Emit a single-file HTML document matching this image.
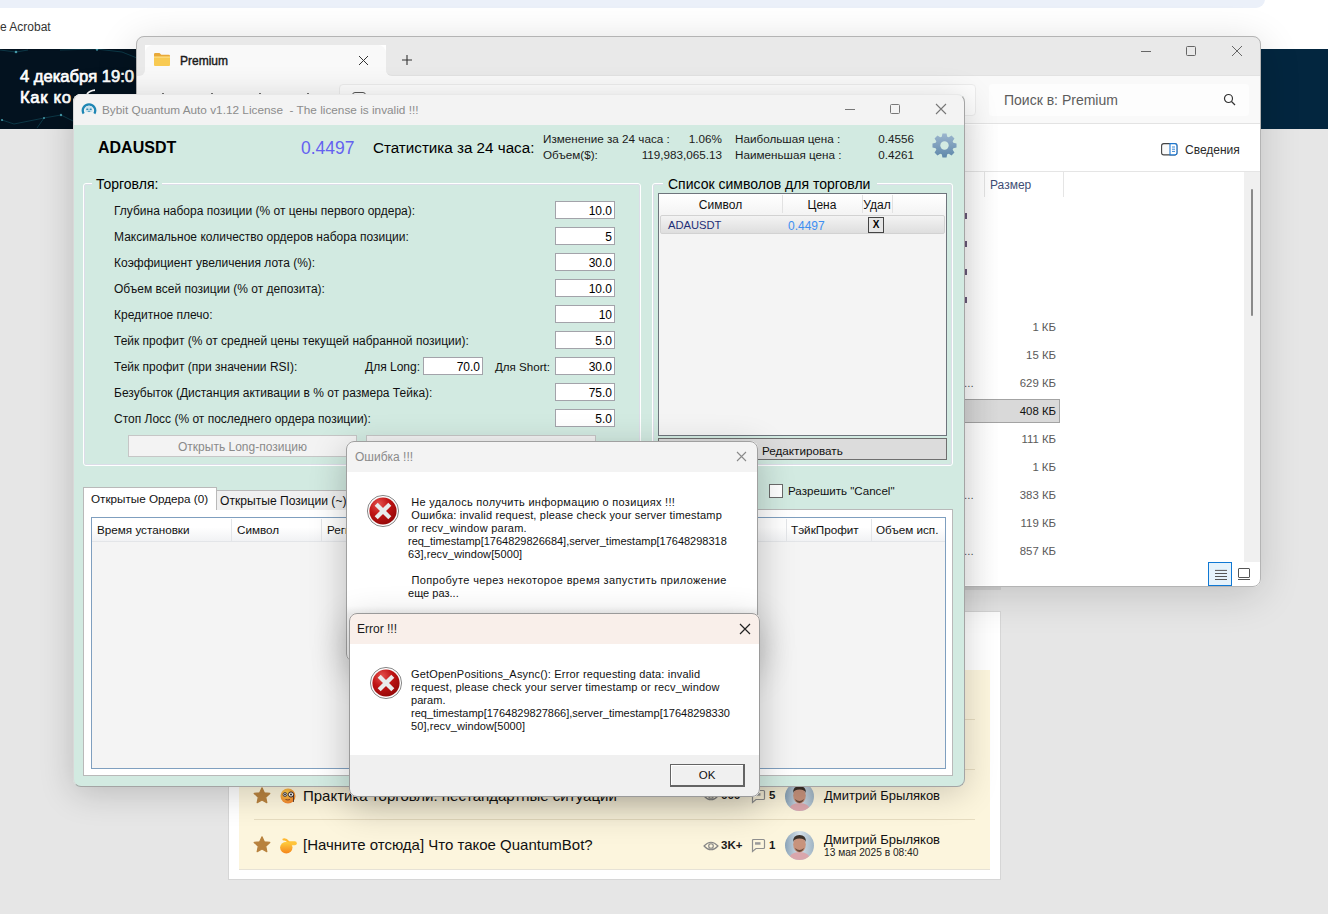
<!DOCTYPE html>
<html><head><meta charset="utf-8">
<style>
*{box-sizing:border-box;margin:0;padding:0}
html,body{width:1328px;height:914px;overflow:hidden}
body{position:relative;background:#e6e6e6;font-family:"Liberation Sans",sans-serif;color:#000}
.a{position:absolute}
.t{position:absolute;white-space:nowrap;line-height:1}
.win{position:absolute;left:0;top:0;width:1328px;height:914px}
.c{text-align:center}
.r{text-align:right}
</style></head><body>

<div class="a" style="left:0px;top:0px;width:1328px;height:49px;background:#fff"></div>
<div class="a" style="left:-10px;top:-10px;width:1275px;height:18px;background:#ebf0f9;border-radius:0 0 9px 0"></div>
<div class="t" style="left:0px;top:21px;font-size:12px;color:#333;">e Acrobat</div>
<div class="a" style="left:0px;top:49px;width:1328px;height:80px;background:#03121f"></div>
<div class="a" style="left:1260px;top:49px;width:68px;height:80px;background:#03263f"></div>
<svg class="a" style="left:0;top:49px" width="137" height="80" viewBox="0 0 137 80"><g stroke="#1d7a8c" stroke-width="0.8" fill="none" opacity="0.45"><path d="M0 1 L16 3 L28 1"/><path d="M60 1 L96 0 L122 3 L137 9"/><path d="M2 71 L14 75 L44 69 L61 66 L73 72"/><path d="M37 79 L44 69"/></g><g fill="#5fc8d8" opacity="0.7"><circle cx="16" cy="3" r="1.3"/><circle cx="97" cy="0.5" r="1.2"/><circle cx="2" cy="71" r="1.1"/><circle cx="44" cy="69" r="1"/><circle cx="61" cy="66" r="1.2"/></g></svg>
<div class="t" style="left:20px;top:69px;font-size:16.6px;color:#fff;-webkit-text-stroke:0.7px #fff;">4 декабря 19:0</div>
<div class="t" style="left:20px;top:90px;font-size:16.6px;color:#fff;-webkit-text-stroke:0.7px #fff;letter-spacing:0.7px;">Как ко</div>
<svg class="a" style="left:86px;top:89px" width="10" height="6" viewBox="0 0 10 6"><path d="M1 5 Q4 1.5 9 1.2" stroke="#fff" stroke-width="1.8" fill="none"/></svg>
<div class="a" style="left:228px;top:611px;width:773px;height:269px;background:#fff;border:1px solid #d6d6d6"></div>
<div class="a" style="left:239px;top:670px;width:751px;height:200px;background:#fcf5dd;border-bottom:1px solid #e6e2d6"></div>
<div class="a" style="left:254px;top:719px;width:721px;height:1px;background:#e6dcc0"></div>
<div class="a" style="left:254px;top:769px;width:721px;height:1px;background:#e6dcc0"></div>
<div class="a" style="left:254px;top:819px;width:721px;height:1px;background:#e6dcc0"></div>
<svg class="a" style="left:253px;top:786.5px" width="18" height="18" viewBox="0 0 18 18"><polygon points="9.00,0.80 11.29,5.84 16.80,6.47 12.71,10.21 13.82,15.63 9.00,12.90 4.18,15.63 5.29,10.21 1.20,6.47 6.71,5.84" fill="#b8823e" stroke="#b8823e" stroke-width="1.2" stroke-linejoin="round"/></svg>
<svg class="a" style="left:280px;top:788px" width="16" height="16" viewBox="0 0 16 16"><defs><radialGradient id="ef1" cx="0.4" cy="0.3" r="0.8"><stop offset="0" stop-color="#ffd04a"/><stop offset="1" stop-color="#f07a2a"/></radialGradient></defs><circle cx="8" cy="8" r="7.5" fill="url(#ef1)"/><circle cx="5" cy="6.5" r="2" fill="#fff" stroke="#3a2a2a" stroke-width="0.8"/><circle cx="11" cy="6.5" r="2.6" fill="#fff" stroke="#3a2a2a" stroke-width="1"/><circle cx="5" cy="6.5" r="0.9" fill="#222"/><circle cx="11" cy="6.5" r="1" fill="#222"/><path d="M13.5 7 V14" stroke="#3a2a2a" stroke-width="0.8"/><path d="M5.5 11.5 Q8 12.5 10 11.5" stroke="#7a3a1a" stroke-width="0.9" fill="none"/></svg>
<div class="t" style="left:303px;top:787.5px;font-size:15px;color:#111;">Практика торговли: нестандартные ситуации</div>
<svg class="a" style="left:703px;top:790px" width="16" height="12" viewBox="0 0 16 12"><path d="M1 6 Q8 -1.5 15 6 Q8 13.5 1 6 Z" stroke="#858585" stroke-width="1.1" fill="none"/><circle cx="8" cy="6" r="2.3" stroke="#858585" stroke-width="1.1" fill="none"/></svg>
<div class="t" style="left:721px;top:790px;font-size:11.5px;color:#1a1a1a;font-weight:bold;">666</div>
<svg class="a" style="left:751px;top:788.5px" width="15" height="15" viewBox="0 0 15 15"><path d="M2.5 1.5 H12.5 Q13.5 1.5 13.5 2.5 V9.5 Q13.5 10.5 12.5 10.5 H5 L1.5 13.5 V2.5 Q1.5 1.5 2.5 1.5 Z" stroke="#8f8f8f" stroke-width="1.2" fill="none"/><rect x="4" y="4.2" width="5.5" height="2.5" fill="#9a9a9a"/></svg>
<div class="t" style="left:769px;top:790px;font-size:11.5px;color:#1a1a1a;font-weight:bold;">5</div>
<svg class="a" style="left:785px;top:781.5px" width="29" height="29" viewBox="0 0 29 29"><defs><clipPath id="avc0"><circle cx="14.5" cy="14.5" r="14.5"/></clipPath><linearGradient id="avb0" x1="0" y1="0" x2="1" y2="0"><stop offset="0" stop-color="#8aa3b8"/><stop offset="0.5" stop-color="#d5e0e8"/><stop offset="1" stop-color="#9fb4c4"/></linearGradient></defs><g clip-path="url(#avc0)"><rect width="29" height="29" fill="url(#avb0)"/><path d="M3 29 Q5 21 14.5 21 Q24 21 26 29 Z" fill="#d9a6ac"/><ellipse cx="14.5" cy="13.5" rx="6.3" ry="8" fill="#c8937c"/><path d="M8 11 Q8 4 14.5 4 Q21 4 21 11 Q20 7.5 14.5 7.5 Q9 7.5 8 11 Z" fill="#3b3028"/><path d="M10 17 Q14.5 21 19 17 Q18 20.5 14.5 21 Q11 20.5 10 17 Z" fill="#6a4a3a"/></g></svg>
<div class="t" style="left:824px;top:788.5px;font-size:13px;color:#111;">Дмитрий Брыляков</div>
<svg class="a" style="left:253px;top:836.0px" width="18" height="18" viewBox="0 0 18 18"><polygon points="9.00,0.80 11.29,5.84 16.80,6.47 12.71,10.21 13.82,15.63 9.00,12.90 4.18,15.63 5.29,10.21 1.20,6.47 6.71,5.84" fill="#b8823e" stroke="#b8823e" stroke-width="1.2" stroke-linejoin="round"/></svg>
<svg class="a" style="left:280px;top:837.5px" width="17" height="16" viewBox="0 0 17 16"><defs><linearGradient id="ef2" x1="0" y1="0" x2="0" y2="1"><stop offset="0" stop-color="#ffcf3e"/><stop offset="1" stop-color="#f5861c"/></linearGradient></defs><rect x="6" y="3.2" width="10.8" height="4" rx="2" fill="#ffc43a"/><path d="M3.5 1.5 Q6.5 1.2 8 3.5 L8.5 5" stroke="#ffb830" stroke-width="2.2" fill="none" stroke-linecap="round"/><ellipse cx="6.3" cy="9.6" rx="6.2" ry="5.8" fill="url(#ef2)"/></svg>
<div class="t" style="left:303px;top:837.0px;font-size:15px;color:#111;">[Начните отсюда] Что такое QuantumBot?</div>
<svg class="a" style="left:703px;top:839.5px" width="16" height="12" viewBox="0 0 16 12"><path d="M1 6 Q8 -1.5 15 6 Q8 13.5 1 6 Z" stroke="#858585" stroke-width="1.1" fill="none"/><circle cx="8" cy="6" r="2.3" stroke="#858585" stroke-width="1.1" fill="none"/></svg>
<div class="t" style="left:721px;top:839.5px;font-size:11.5px;color:#1a1a1a;font-weight:bold;">3K+</div>
<svg class="a" style="left:751px;top:838.0px" width="15" height="15" viewBox="0 0 15 15"><path d="M2.5 1.5 H12.5 Q13.5 1.5 13.5 2.5 V9.5 Q13.5 10.5 12.5 10.5 H5 L1.5 13.5 V2.5 Q1.5 1.5 2.5 1.5 Z" stroke="#8f8f8f" stroke-width="1.2" fill="none"/><rect x="4" y="4.2" width="5.5" height="2.5" fill="#9a9a9a"/></svg>
<div class="t" style="left:769px;top:839.5px;font-size:11.5px;color:#1a1a1a;font-weight:bold;">1</div>
<svg class="a" style="left:785px;top:831.0px" width="29" height="29" viewBox="0 0 29 29"><defs><clipPath id="avc1"><circle cx="14.5" cy="14.5" r="14.5"/></clipPath><linearGradient id="avb1" x1="0" y1="0" x2="1" y2="0"><stop offset="0" stop-color="#8aa3b8"/><stop offset="0.5" stop-color="#d5e0e8"/><stop offset="1" stop-color="#9fb4c4"/></linearGradient></defs><g clip-path="url(#avc1)"><rect width="29" height="29" fill="url(#avb1)"/><path d="M3 29 Q5 21 14.5 21 Q24 21 26 29 Z" fill="#d9a6ac"/><ellipse cx="14.5" cy="13.5" rx="6.3" ry="8" fill="#c8937c"/><path d="M8 11 Q8 4 14.5 4 Q21 4 21 11 Q20 7.5 14.5 7.5 Q9 7.5 8 11 Z" fill="#3b3028"/><path d="M10 17 Q14.5 21 19 17 Q18 20.5 14.5 21 Q11 20.5 10 17 Z" fill="#6a4a3a"/></g></svg>
<div class="t" style="left:824px;top:833.0px;font-size:13px;color:#111;">Дмитрий Брыляков</div>
<div class="t" style="left:824px;top:848.0px;font-size:10.2px;color:#222;">13 мая 2025 в 08:40</div>
<div class="a" style="left:965px;top:587px;width:36px;height:3px;background:#d4d4d4"></div>
<div class="a" style="left:136px;top:36px;width:1125px;height:551px;border-radius:8px;box-shadow:0 8px 40px rgba(0,0,0,.16)"></div>
<div class="win" style="clip-path:inset(36px 67px 327px 136px round 8px)">
<div class="a" style="left:136px;top:36px;width:1125px;height:551px;background:#fff"></div>
<div class="a" style="left:136px;top:60px;width:1125px;height:64px;background:#f9f9f9;border-bottom:1px solid #e3e3e3"></div>
<div class="a" style="left:136px;top:36px;width:1125px;height:9px;background:#e9e9e9"></div>
<div class="a" style="left:136px;top:36px;width:9px;height:40px;background:#e9e9e9;border-bottom-right-radius:6px"></div>
<div class="a" style="left:145px;top:45px;width:241px;height:35px;background:#f9f9f9;border-radius:8px 8px 0 0"></div>
<div class="a" style="left:386px;top:36px;width:875px;height:40px;background:#e9e9e9;border-bottom-left-radius:6px;border-bottom:1px solid #e2e2e2"></div>
<div class="a" style="left:339px;top:84px;width:637px;height:32px;background:#fdfdfd;border-radius:4px;border:1px solid #ececec"></div>
<div class="a" style="left:162px;top:93px;width:2px;height:2px;background:#444;border-radius:1px"></div>
<div class="a" style="left:211px;top:93px;width:2px;height:2px;background:#444;border-radius:1px"></div>
<div class="a" style="left:259px;top:93px;width:2px;height:2px;background:#444;border-radius:1px"></div>
<div class="a" style="left:307px;top:93px;width:2px;height:2px;background:#444;border-radius:1px"></div>
<div class="a" style="left:352px;top:92px;width:14px;height:8px;border:1.3px solid #555;border-radius:3px"></div>
<svg class="a" style="left:153px;top:52px" width="18" height="15" viewBox="0 0 18 15"><path d="M1 2.2 Q1 1 2.2 1 H6.5 L8.3 2.8 H15.8 Q17 2.8 17 4 V5 H1 Z" fill="#e8a93a"/><path d="M1 4.6 H17 V13 Q17 14 16 14 H2 Q1 14 1 13 Z" fill="#f8ca52"/><path d="M1 4.6 H17 V6 H1Z" fill="#fbd878"/></svg>
<div class="t" style="left:180px;top:54.5px;font-size:12px;color:#1a1a1a;-webkit-text-stroke:0.4px #1a1a1a;">Premium</div>
<svg class="a" style="left:358px;top:55px" width="11" height="11" viewBox="0 0 11 11"><path d="M1 1 L10 10 M10 1 L1 10" stroke="#333" stroke-width="1"/></svg>
<svg class="a" style="left:401px;top:54px" width="12" height="12" viewBox="0 0 12 12"><path d="M6 1 V11 M1 6 H11" stroke="#333" stroke-width="1.1"/></svg>
<div class="a" style="left:1141px;top:51px;width:10px;height:1px;background:#666"></div>
<div class="a" style="left:1186px;top:46px;width:10px;height:10px;border:1px solid #666;border-radius:1.5px"></div>
<svg class="a" style="left:1231px;top:45px" width="12" height="12" viewBox="0 0 12 12"><path d="M1 1 L11 11 M11 1 L1 11" stroke="#666" stroke-width="1"/></svg>
<div class="a" style="left:989px;top:84px;width:260px;height:32px;background:#fdfdfd;border-radius:4px"></div>
<div class="t" style="left:1004px;top:93px;font-size:14px;color:#5c5c5c;">Поиск в: Premium</div>
<svg class="a" style="left:1223px;top:93px" width="14" height="14" viewBox="0 0 14 14"><circle cx="5.5" cy="5.5" r="4" stroke="#333" stroke-width="1.2" fill="none"/><path d="M8.5 8.5 L12 12" stroke="#333" stroke-width="1.3"/></svg>
<div class="a" style="left:136px;top:171px;width:1125px;height:1px;background:#e5e5e5"></div>
<svg class="a" style="left:1161px;top:143px" width="17" height="13" viewBox="0 0 17 13"><rect x="0.6" y="0.6" width="15.3" height="11.3" rx="2.2" stroke="#444" stroke-width="1.1" fill="#fafafa"/><path d="M9 0.6 H13.7 Q15.9 0.6 15.9 2.8 V9.7 Q15.9 11.9 13.7 11.9 H9 Z" stroke="#1f78d0" stroke-width="1.1" fill="#fff"/><path d="M11 4 H14 M11 6.2 H14 M11 8.4 H14" stroke="#1f78d0" stroke-width="0.9"/></svg>
<div class="t" style="left:1185px;top:144px;font-size:12px;color:#2a2a2a;">Сведения</div>
<div class="a" style="left:984px;top:172px;width:1px;height:25px;background:#e5e5e5"></div>
<div class="a" style="left:1063px;top:172px;width:1px;height:25px;background:#e5e5e5"></div>
<div class="t" style="left:990px;top:179px;font-size:12px;color:#3e4d74;">Размер</div>
<div class="t r" style="left:980px;top:322px;width:76px;font-size:11.4px;color:#5a5a5a">1 КБ</div>
<div class="t r" style="left:980px;top:350px;width:76px;font-size:11.4px;color:#5a5a5a">15 КБ</div>
<div class="t r" style="left:980px;top:378px;width:76px;font-size:11.4px;color:#5a5a5a">629 КБ</div>
<div class="a" style="left:960px;top:399px;width:100px;height:24px;background:#d9d9d9;border:1px solid #a3a3a3"></div>
<div class="t r" style="left:980px;top:406px;width:76px;font-size:11.4px;color:#111">408 КБ</div>
<div class="t r" style="left:980px;top:434px;width:76px;font-size:11.4px;color:#5a5a5a">111 КБ</div>
<div class="t r" style="left:980px;top:462px;width:76px;font-size:11.4px;color:#5a5a5a">1 КБ</div>
<div class="t r" style="left:980px;top:490px;width:76px;font-size:11.4px;color:#5a5a5a">383 КБ</div>
<div class="t r" style="left:980px;top:518px;width:76px;font-size:11.4px;color:#5a5a5a">119 КБ</div>
<div class="t r" style="left:980px;top:546px;width:76px;font-size:11.4px;color:#5a5a5a">857 КБ</div>
<div class="t" style="left:964px;top:378px;font-size:11.5px;color:#555;">...</div>
<div class="t" style="left:964px;top:490px;font-size:11.5px;color:#555;">...</div>
<div class="t" style="left:964px;top:546px;font-size:11.5px;color:#555;">...</div>
<div class="a" style="left:965px;top:213px;width:1.5px;height:6px;background:#6a5a7a"></div>
<div class="a" style="left:965px;top:241px;width:1.5px;height:6px;background:#6a5a7a"></div>
<div class="a" style="left:965px;top:269px;width:1.5px;height:6px;background:#6a5a7a"></div>
<div class="a" style="left:965px;top:297px;width:1.5px;height:6px;background:#6a5a7a"></div>
<div class="a" style="left:1244px;top:172px;width:16px;height:390px;background:#f0f0f0"></div>
<div class="a" style="left:1251px;top:189px;width:2px;height:127px;background:#8a8a8a;border-radius:1px"></div>
<div class="a" style="left:1208px;top:562px;width:24px;height:24px;background:#e5f2fb;border:1.5px solid #0f78d4"></div>
<svg class="a" style="left:1213px;top:567px" width="16" height="14" viewBox="0 0 16 14"><path d="M2 3.4 H14 M2 6.5 H14 M2 9.5 H14 M2 12.5 H14" stroke="#555" stroke-width="1"/></svg>
<div class="a" style="left:1238px;top:568px;width:12px;height:10px;border:1px solid #555;border-radius:1px"></div>
<div class="a" style="left:1238px;top:579px;width:12px;height:1px;background:#555"></div>
<div class="a" style="left:965px;top:125px;width:35px;height:460px;background:linear-gradient(90deg,rgba(0,0,0,.03),rgba(0,0,0,0))"></div>
</div>
<div class="a" style="left:136px;top:36px;width:1125px;height:551px;border:1px solid #b4b4b4;border-radius:8px"></div>
<div class="a" style="left:73px;top:94px;width:892px;height:693px;border-radius:8px;box-shadow:0 6px 34px rgba(0,0,0,.19)"></div>
<div class="win" style="clip-path:inset(94px 363px 127px 73px round 8px)">
<div class="a" style="left:73px;top:94px;width:892px;height:693px;background:#d2eae1"></div>
<div class="a" style="left:73px;top:94px;width:892px;height:31px;background:#f3f3f3"></div>
<svg class="a" style="left:81px;top:100px" width="16" height="16" viewBox="0 0 16 16"><path d="M2.6 13.6 A6.2 6.2 0 1 1 13.4 13.6" stroke="#1e86b4" stroke-width="2.3" fill="none"/><path d="M4.8 6.8 Q8 5 11.2 6.8 L11.6 11.5 Q8 13 4.4 11.5 Z" fill="#c6e0ec"/><ellipse cx="6.3" cy="9.3" rx="1.2" ry="0.8" fill="#2a86b0"/><ellipse cx="9.7" cy="9.3" rx="1.2" ry="0.8" fill="#2a86b0"/><rect x="6.8" y="10.8" width="2.4" height="1.2" fill="#5aa4c8"/></svg>
<div class="t" style="left:102px;top:105px;font-size:11.8px;color:#8c8c8c;">Bybit Quantum Auto v1.12 License&nbsp; - The license is invalid !!!</div>
<div class="a" style="left:845px;top:109px;width:10px;height:1px;background:#777"></div>
<div class="a" style="left:890px;top:104px;width:10px;height:10px;border:1px solid #777;border-radius:1.5px"></div>
<svg class="a" style="left:935px;top:103px" width="12" height="12" viewBox="0 0 12 12"><path d="M1 1 L11 11 M11 1 L1 11" stroke="#777" stroke-width="1.1"/></svg>
<div class="t" style="left:98px;top:140px;font-size:16px;color:#000;font-weight:bold;">ADAUSDT</div>
<div class="t" style="left:301px;top:140px;font-size:17.5px;color:#6461f0;">0.4497</div>
<div class="t" style="left:373px;top:140px;font-size:15.2px;color:#000;">Статистика за 24 часа:</div>
<div class="t" style="left:543px;top:133px;font-size:11.7px;color:#1a1a1a;">Изменение за 24 часа :</div>
<div class="t" style="left:543px;top:149px;font-size:11.7px;color:#1a1a1a;">Объем($):</div>
<div class="t r" style="left:600px;top:133px;width:122px;font-size:11.7px;color:#1a1a1a">1.06%</div>
<div class="t r" style="left:600px;top:149px;width:122px;font-size:11.7px;color:#1a1a1a">119,983,065.13</div>
<div class="t" style="left:735px;top:133px;font-size:11.7px;color:#1a1a1a;">Наибольшая цена :</div>
<div class="t" style="left:735px;top:149px;font-size:11.7px;color:#1a1a1a;">Наименьшая цена :</div>
<div class="t r" style="left:850px;top:133px;width:64px;font-size:11.7px;color:#1a1a1a">0.4556</div>
<div class="t r" style="left:850px;top:149px;width:64px;font-size:11.7px;color:#1a1a1a">0.4261</div>
<svg class="a" style="left:932px;top:133px" width="25" height="25" viewBox="0 0 25 25"><defs><linearGradient id="gg" x1="0" y1="0" x2="0" y2="1"><stop offset="0" stop-color="#9cb6ce"/><stop offset="1" stop-color="#5f88aa"/></linearGradient></defs><polygon points="24.52,10.44 24.52,14.56 21.29,15.22 20.64,16.79 22.46,19.54 19.54,22.46 16.79,20.64 15.22,21.29 14.56,24.52 10.44,24.52 9.78,21.29 8.21,20.64 5.46,22.46 2.54,19.54 4.36,16.79 3.71,15.22 0.48,14.56 0.48,10.44 3.71,9.78 4.36,8.21 2.54,5.46 5.46,2.54 8.21,4.36 9.78,3.71 10.44,0.48 14.56,0.48 15.22,3.71 16.79,4.36 19.54,2.54 22.46,5.46 20.64,8.21 21.29,9.78" fill="url(#gg)"/><circle cx="12.5" cy="12.5" r="4.2" fill="#d3ebe2"/></svg>
<div class="a" style="left:83px;top:183px;width:558px;height:283px;border:1px solid #fff;border-radius:3px"></div>
<div class="a" style="left:84px;top:184px;width:556px;height:281px;border:1px solid #dcdde8;border-radius:3px"></div>
<div class="a" style="left:92px;top:175px;width:70px;height:17px;background:#d2eae1"></div>
<div class="t" style="left:96px;top:177px;font-size:14px;color:#000;">Торговля:</div>
<div class="t" style="left:114px;top:205px;font-size:12px;color:#111;">Глубина набора позиции (% от цены первого ордера):</div>
<div class="t r" style="left:555px;top:201px;width:60px;height:18px;background:#fff;border:1px solid #a3a3aa;font-size:12px;padding:3px 2px 0 0;color:#000">10.0</div>
<div class="t" style="left:114px;top:231px;font-size:12px;color:#111;">Максимальное количество ордеров набора позиции:</div>
<div class="t r" style="left:555px;top:227px;width:60px;height:18px;background:#fff;border:1px solid #a3a3aa;font-size:12px;padding:3px 2px 0 0;color:#000">5</div>
<div class="t" style="left:114px;top:257px;font-size:12px;color:#111;">Коэффициент увеличения лота (%):</div>
<div class="t r" style="left:555px;top:253px;width:60px;height:18px;background:#fff;border:1px solid #a3a3aa;font-size:12px;padding:3px 2px 0 0;color:#000">30.0</div>
<div class="t" style="left:114px;top:283px;font-size:12px;color:#111;">Объем всей позиции (% от депозита):</div>
<div class="t r" style="left:555px;top:279px;width:60px;height:18px;background:#fff;border:1px solid #a3a3aa;font-size:12px;padding:3px 2px 0 0;color:#000">10.0</div>
<div class="t" style="left:114px;top:309px;font-size:12px;color:#111;">Кредитное плечо:</div>
<div class="t r" style="left:555px;top:305px;width:60px;height:18px;background:#fff;border:1px solid #a3a3aa;font-size:12px;padding:3px 2px 0 0;color:#000">10</div>
<div class="t" style="left:114px;top:335px;font-size:12px;color:#111;">Тейк профит (% от средней цены текущей набранной позиции):</div>
<div class="t r" style="left:555px;top:331px;width:60px;height:18px;background:#fff;border:1px solid #a3a3aa;font-size:12px;padding:3px 2px 0 0;color:#000">5.0</div>
<div class="t" style="left:114px;top:361px;font-size:12px;color:#111;">Тейк профит (при значении RSI):</div>
<div class="t r" style="left:555px;top:357px;width:60px;height:18px;background:#fff;border:1px solid #a3a3aa;font-size:12px;padding:3px 2px 0 0;color:#000">30.0</div>
<div class="t" style="left:114px;top:387px;font-size:12px;color:#111;">Безубыток (Дистанция активации в % от размера Тейка):</div>
<div class="t r" style="left:555px;top:383px;width:60px;height:18px;background:#fff;border:1px solid #a3a3aa;font-size:12px;padding:3px 2px 0 0;color:#000">75.0</div>
<div class="t" style="left:114px;top:413px;font-size:12px;color:#111;">Стоп Лосс (% от последнего ордера позиции):</div>
<div class="t r" style="left:555px;top:409px;width:60px;height:18px;background:#fff;border:1px solid #a3a3aa;font-size:12px;padding:3px 2px 0 0;color:#000">5.0</div>
<div class="t" style="left:365px;top:361px;font-size:12px;color:#111;">Для Long:</div>
<div class="t r" style="left:423px;top:357px;width:60px;height:18px;background:#fff;border:1px solid #a3a3aa;font-size:12px;padding:3px 2px 0 0;color:#000">70.0</div>
<div class="t" style="left:495px;top:361px;font-size:11.6px;color:#111;">Для Short:</div>
<div class="t c" style="left:128px;top:435px;width:229px;height:22px;background:#f3f3f3;border:1px solid #c6c6c6;font-size:12px;padding-top:5px;color:#8a8a8a">Открыть Long-позицию</div>
<div class="t c" style="left:366px;top:435px;width:230px;height:22px;background:#f3f3f3;border:1px solid #c6c6c6;font-size:12px;padding-top:5px;color:#8a8a8a">Открыть Short-позицию</div>
<div class="a" style="left:652px;top:183px;width:301px;height:283px;border:1px solid #fff;border-radius:3px"></div>
<div class="a" style="left:653px;top:184px;width:299px;height:281px;border:1px solid #dcdde8;border-radius:3px"></div>
<div class="a" style="left:663px;top:175px;width:214px;height:17px;background:#d2eae1"></div>
<div class="t" style="left:668px;top:177px;font-size:14px;color:#000;">Список символов для торговли</div>
<div class="a" style="left:658px;top:193px;width:289px;height:243px;background:#f4f4f4;border:1px solid #6e747c"></div>
<div class="a" style="left:659px;top:194px;width:287px;height:20px;background:linear-gradient(#fff,#f4f4f4)"></div>
<div class="a" style="left:782px;top:195px;width:1px;height:18px;background:#e2e2e2"></div>
<div class="a" style="left:862px;top:195px;width:1px;height:18px;background:#e2e2e2"></div>
<div class="a" style="left:892px;top:195px;width:1px;height:18px;background:#e2e2e2"></div>
<div class="t c" style="left:659px;top:199px;width:123px;font-size:12px;color:#111">Символ</div>
<div class="t c" style="left:782px;top:199px;width:80px;font-size:12px;color:#111">Цена</div>
<div class="t c" style="left:862px;top:199px;width:30px;font-size:12px;color:#111">Удал</div>
<div class="a" style="left:660px;top:215px;width:285px;height:19px;background:linear-gradient(#f3f3f3,#dedede);border:1px solid #d2d2d2;border-radius:2px"></div>
<div class="t" style="left:668px;top:220px;font-size:11.2px;color:#1f2f78;">ADAUSDT</div>
<div class="t" style="left:788px;top:220px;font-size:12px;color:#3d8ff2;">0.4497</div>
<div class="t c" style="left:868px;top:217px;width:16px;height:16px;background:#e6e6e6;border:1px solid #444;font-size:10px;font-weight:bold;padding-top:2px">X</div>
<div class="a" style="left:658px;top:438px;width:289px;height:22px;background:#dcdcdc;border:1px solid #6f6f6f"></div>
<div class="t" style="left:762px;top:444.5px;font-size:11.7px;color:#111;">Редактировать</div>
<div class="a" style="left:769px;top:484px;width:14px;height:14px;background:#fff;border:1px solid #6a6a6a"></div>
<div class="t" style="left:788px;top:485px;font-size:11.6px;color:#111;">Разрешить "Cancel"</div>
<div class="a" style="left:83px;top:509px;width:870px;height:267px;background:#fff;border:1px solid #b9b9b9"></div>
<div class="a" style="left:216px;top:490px;width:131px;height:20px;background:#f0f0f0;border:1px solid #b9b9b9;border-bottom:none"></div>
<div class="a" style="left:83px;top:487px;width:134px;height:23px;background:#fff;border:1px solid #b9b9b9;border-bottom:none"></div>
<div class="t" style="left:91px;top:493px;font-size:11.7px;color:#111;">Открытые Ордера (0)</div>
<div class="t" style="left:220px;top:495px;font-size:12.1px;color:#111;">Открытые Позиции (~)</div>
<div class="a" style="left:91px;top:517px;width:855px;height:252px;background:#f4f4f4;border:1px solid #7f9fbf"></div>
<div class="a" style="left:92px;top:518px;width:853px;height:24px;background:linear-gradient(#fff 0%,#fff 40%,#f1f2f4 100%);border-bottom:1px solid #e3e5e8"></div>
<div class="a" style="left:231px;top:519px;width:1px;height:22px;background:#e3e5e8"></div>
<div class="a" style="left:321px;top:519px;width:1px;height:22px;background:#e3e5e8"></div>
<div class="a" style="left:786px;top:519px;width:1px;height:22px;background:#e3e5e8"></div>
<div class="a" style="left:871px;top:519px;width:1px;height:22px;background:#e3e5e8"></div>
<div class="t" style="left:97px;top:524px;font-size:11.7px;color:#111;">Время установки</div>
<div class="t" style="left:237px;top:524px;font-size:11.7px;color:#111;">Символ</div>
<div class="t" style="left:327px;top:524px;font-size:11.7px;color:#111;">Регион</div>
<div class="t" style="left:791px;top:524px;font-size:11.7px;color:#111;">ТэйкПрофит</div>
<div class="t" style="left:876px;top:524px;font-size:11.7px;color:#111;">Объем исп.</div>
</div>
<div class="a" style="left:73px;top:94px;width:892px;height:693px;border:1px solid #a4a4a4;border-top-color:#e8e8e8;border-left-color:#d8d8d8;border-radius:8px"></div>
<div class="a" style="left:346px;top:441px;width:412px;height:221px;border-radius:8px;box-shadow:0 10px 36px rgba(0,0,0,.24)"></div>
<div class="win" style="clip-path:inset(441px 570px 252px 346px round 8px)">
<div class="a" style="left:346px;top:441px;width:412px;height:221px;background:#fff"></div>
<div class="a" style="left:346px;top:441px;width:412px;height:31px;background:#f3f3f3"></div>
<div class="a" style="left:346px;top:606px;width:412px;height:56px;background:linear-gradient(#fff,#f0f0f0 8px)"></div>
<div class="t" style="left:355px;top:451px;font-size:12px;color:#8a8a8a;">Ошибка !!!</div>
<svg class="a" style="left:736px;top:451px" width="11" height="11" viewBox="0 0 11 11"><path d="M1 1 L10 10 M10 1 L1 10" stroke="#8a8a8a" stroke-width="1.1"/></svg>
<svg class="a" style="left:366px;top:494px" width="34" height="34" viewBox="0 0 34 34"><defs><radialGradient id="rg1" cx="0.35" cy="0.25" r="0.85"><stop offset="0" stop-color="#e4524e"/><stop offset="0.45" stop-color="#c01414"/><stop offset="1" stop-color="#8e0606"/></radialGradient></defs><circle cx="17" cy="17" r="15.6" fill="#fafafa" stroke="#8a8a8a" stroke-width="1"/><circle cx="17" cy="17" r="13.6" fill="url(#rg1)"/><path d="M10.2 10.2 L23.8 23.8 M23.8 10.2 L10.2 23.8" stroke="#e8ecec" stroke-width="4.3" stroke-linecap="butt"/></svg>
<div class="t" style="left:408px;top:497px;font-size:11px;color:#111;letter-spacing:0.293px;">&nbsp;Не удалось получить информацию о позициях !!!</div>
<div class="t" style="left:408px;top:510px;font-size:11px;color:#111;letter-spacing:0.178px;">&nbsp;Ошибка: invalid request, please check your server timestamp</div>
<div class="t" style="left:408px;top:523px;font-size:11px;color:#111;letter-spacing:0.245px;">or recv_window param.</div>
<div class="t" style="left:408px;top:536px;font-size:11px;color:#111;letter-spacing:-0.008px;">req_timestamp[1764829826684],server_timestamp[17648298318</div>
<div class="t" style="left:408px;top:549px;font-size:11px;color:#111;letter-spacing:0.081px;">63],recv_window[5000]</div>
<div class="t" style="left:408px;top:575px;font-size:11px;color:#111;letter-spacing:0.383px;">&nbsp;Попробуте через некоторое время запустить приложение</div>
<div class="t" style="left:408px;top:588px;font-size:11px;color:#111;letter-spacing:0.021px;">еще раз...</div>
</div>
<div class="a" style="left:346px;top:441px;width:412px;height:221px;border:1px solid #a0a0a0;border-radius:8px"></div>
<div class="a" style="left:349px;top:613px;width:411px;height:184px;border-radius:8px;box-shadow:0 10px 36px rgba(0,0,0,.24)"></div>
<div class="win" style="clip-path:inset(613px 568px 117px 349px round 8px)">
<div class="a" style="left:349px;top:613px;width:411px;height:184px;background:#fff"></div>
<div class="a" style="left:349px;top:613px;width:411px;height:31px;background:#f9efea"></div>
<div class="a" style="left:349px;top:755px;width:411px;height:42px;background:#f0f0f0"></div>
<div class="t" style="left:357px;top:623px;font-size:12px;color:#1a1a1a;">Error !!!</div>
<svg class="a" style="left:739px;top:623px" width="12" height="12" viewBox="0 0 12 12"><path d="M1 1 L11 11 M11 1 L1 11" stroke="#222" stroke-width="1.2"/></svg>
<svg class="a" style="left:369px;top:666px" width="34" height="34" viewBox="0 0 34 34"><defs><radialGradient id="rg2" cx="0.35" cy="0.25" r="0.85"><stop offset="0" stop-color="#e4524e"/><stop offset="0.45" stop-color="#c01414"/><stop offset="1" stop-color="#8e0606"/></radialGradient></defs><circle cx="17" cy="17" r="15.6" fill="#fafafa" stroke="#8a8a8a" stroke-width="1"/><circle cx="17" cy="17" r="13.6" fill="url(#rg2)"/><path d="M10.2 10.2 L23.8 23.8 M23.8 10.2 L10.2 23.8" stroke="#e8ecec" stroke-width="4.3" stroke-linecap="butt"/></svg>
<div class="t" style="left:411px;top:669px;font-size:11px;color:#111;letter-spacing:0.175px;">GetOpenPositions_Async(): Error requesting data: invalid</div>
<div class="t" style="left:411px;top:682px;font-size:11px;color:#111;letter-spacing:0.179px;">request, please check your server timestamp or recv_window</div>
<div class="t" style="left:411px;top:695px;font-size:11px;color:#111;letter-spacing:0.058px;">param.</div>
<div class="t" style="left:411px;top:708px;font-size:11px;color:#111;letter-spacing:-0.005px;">req_timestamp[1764829827866],server_timestamp[17648298330</div>
<div class="t" style="left:411px;top:721px;font-size:11px;color:#111;letter-spacing:0.076px;">50],recv_window[5000]</div>
<div class="t c" style="left:670px;top:764px;width:75px;height:23px;background:#f0f0f0;border:1px solid #646464;border-right-width:2px;border-bottom-width:2px;box-shadow:inset 1px 1px 0 #fff;font-size:11.5px;padding-top:5px;color:#111">OK</div>
</div>
<div class="a" style="left:349px;top:613px;width:411px;height:184px;border:1px solid #9a9a9a;border-radius:8px"></div>
</body></html>
